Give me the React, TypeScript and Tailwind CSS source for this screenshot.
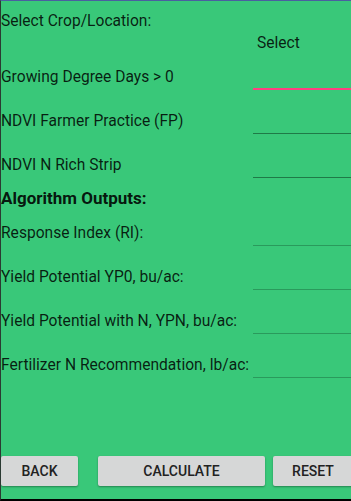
import React from "react";

const Row = ({ label, line }: { label: string; line: string }) => (
  <div className="flex h-[44px]">
    <div className="flex-1 pt-[12px] leading-[20px] whitespace-nowrap">{label}</div>
    <div className={`w-[98px] h-[35px] shrink-0 ${line}`} />
  </div>
);

export default function App() {
  return (
    <div
      className="w-[351px] h-[501px] bg-[#39c879] border-t border-t-[#4a5fa0] border-l border-l-[#2b3a32] border-b-2 border-b-black flex flex-col text-[15.6px] text-[rgba(0,0,0,0.85)] overflow-hidden"
      style={{ fontFamily: "Roboto, 'Noto Sans', sans-serif" }}
    >
      <div className="pt-[10px] leading-[20px] h-[30px]">Select Crop/Location:</div>
      <div className="h-[24px] leading-[24px] pl-[256px]">Select</div>
      <Row label="Growing Degree Days > 0" line="border-b-2 border-b-[#ff4081]" />
      <Row label="NDVI Farmer Practice (FP)" line="border-b-[1.5px] border-b-[#1f7a47]" />
      <Row label="NDVI N Rich Strip" line="border-b-[1.5px] border-b-[#1f7a47]" />
      <div className="h-[24px] leading-[22px] text-[17px] font-bold text-[rgba(0,0,0,0.9)]">Algorithm Outputs:</div>
      <Row label="Response Index (RI):" line="border-b border-b-[#2a9a5c]" />
      <Row label="Yield Potential YP0, bu/ac:" line="border-b border-b-[#2a9a5c]" />
      <Row label="Yield Potential with N, YPN, bu/ac:" line="border-b border-b-[#2a9a5c]" />
      <Row label="Fertilizer N Recommendation, lb/ac:" line="border-b border-b-[#2a9a5c]" />
      <div className="flex-1" />
      <div className="flex pb-[13px] text-[14px] font-medium text-[#222]">
        <button className="w-[77px] h-[30px] shrink-0 bg-[#d6d7d7] rounded-[2px] shadow-[0_1px_2px_rgba(0,0,0,0.35)]">BACK</button>
        <button className="ml-[20px] w-[167px] h-[30px] shrink-0 bg-[#d6d7d7] rounded-[2px] shadow-[0_1px_2px_rgba(0,0,0,0.35)]">CALCULATE</button>
        <button className="ml-[8px] w-[80px] h-[30px] shrink-0 bg-[#d6d7d7] rounded-[2px] shadow-[0_1px_2px_rgba(0,0,0,0.35)]">RESET</button>
      </div>
    </div>
  );
}
